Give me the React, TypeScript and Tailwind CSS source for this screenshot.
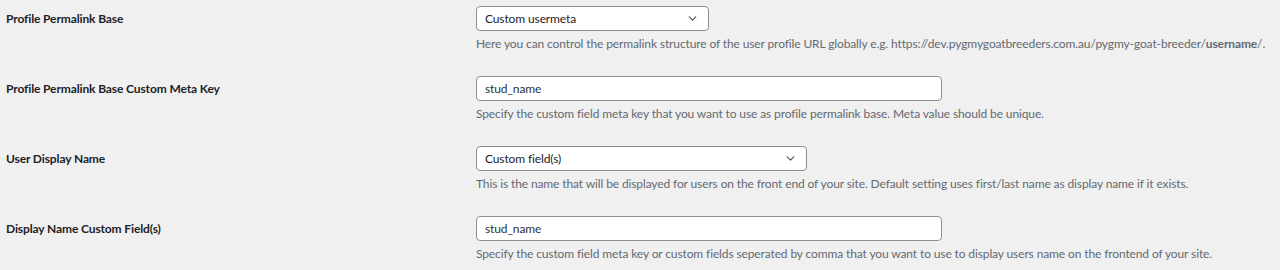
import { ChevronDown } from 'lucide-react'

interface Row {
  label: string
  kind: 'select' | 'input'
  value: string
  width: string
  description: React.ReactNode
}

const ROWS: Row[] = [
  {
    label: 'Profile Permalink Base',
    kind: 'select',
    value: 'Custom usermeta',
    width: 'w-[233px]',
    description: (
      <>
        Here you can control the permalink structure of the user profile URL globally e.g.
        https://dev.pygmygoatbreeders.com.au/pygmy-goat-breeder/
        <strong className="font-bold">username</strong>/.
      </>
    ),
  },
  {
    label: 'Profile Permalink Base Custom Meta Key',
    kind: 'input',
    value: 'stud_name',
    width: 'w-[466px]',
    description: 'Specify the custom field meta key that you want to use as profile permalink base. Meta value should be unique.',
  },
  {
    label: 'User Display Name',
    kind: 'select',
    value: 'Custom field(s)',
    width: 'w-[331px]',
    description:
      'This is the name that will be displayed for users on the front end of your site. Default setting uses first/last name as display name if it exists.',
  },
  {
    label: 'Display Name Custom Field(s)',
    kind: 'input',
    value: 'stud_name',
    width: 'w-[466px]',
    description:
      'Specify the custom field meta key or custom fields seperated by comma that you want to use to display users name on the frontend of your site.',
  },
]

export default function App() {
  return (
    <div className="h-[270px] w-[1280px] overflow-hidden bg-[#f0f0f1] pl-[6px] pt-[6px] font-['Lato',sans-serif] tracking-[-0.12px] text-[#1d2327]">
      {ROWS.map((row) => (
        <div key={row.label} className="flex h-[70px]">
          <div className="w-[470px] shrink-0 text-[12px] font-bold leading-[25px]">{row.label}</div>
          <div className="min-w-0 flex-1">
            {row.kind === 'select' ? (
              <div
                className={`flex h-[25px] ${row.width} items-center justify-between rounded-[4px] border border-[#8c8f94] bg-white pl-[8px] pr-[9px] text-[12px]`}
              >
                <span>{row.value}</span>
                <ChevronDown className="h-[13px] w-[13px] text-[#50575e]" strokeWidth={2.2} />
              </div>
            ) : (
              <input
                readOnly
                value={row.value}
                className={`block h-[25px] ${row.width} rounded-[4px] border border-[#8c8f94] bg-white px-[8px] text-[12px] tracking-[-0.12px] text-[#2c3338] outline-none`}
              />
            )}
            <p className="mt-[5px] whitespace-nowrap text-[12px] leading-[16px] text-[#646970]">{row.description}</p>
          </div>
        </div>
      ))}
    </div>
  )
}
